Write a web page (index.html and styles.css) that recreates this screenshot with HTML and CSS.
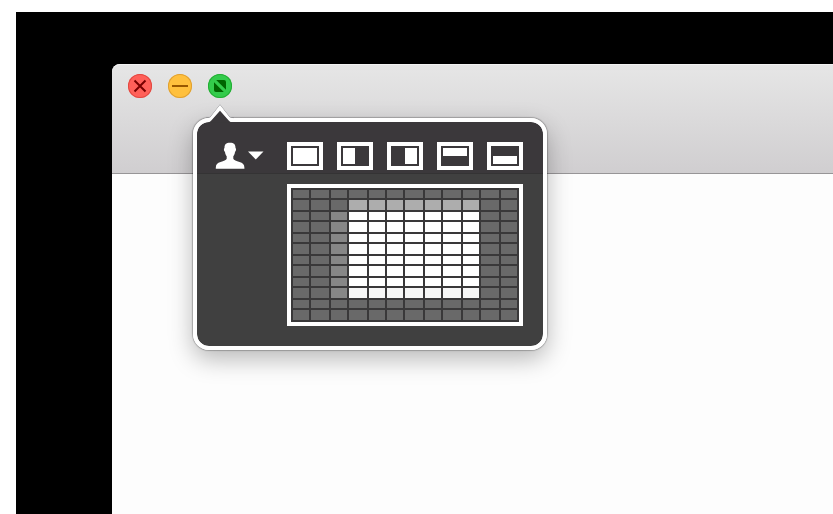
FILE: index.html
```
<!DOCTYPE html>
<html lang="en">
<head>
<meta charset="utf-8">
<title>Window layout</title>
<link rel="stylesheet" href="styles.css">
</head>
<body>
<main class="desktop">
  <section class="window">
    <header class="titlebar">
      <button class="light close" aria-label="Close"><svg viewBox="0 0 24 24"><path d="M6.500 6.500l11 11M17.500 6.500l-11 11" stroke="#790000" stroke-width="2"/></svg></button>
      <button class="light minimize" aria-label="Minimize"><svg viewBox="0 0 24 24"><path d="M4 12h16" stroke="#985700" stroke-width="2"/></svg></button>
      <button class="light zoom" aria-label="Zoom"><svg viewBox="0 0 24 24"><path d="M8.200 6H16a2 2 0 0 1 2 2v7.800zM6 8.200L15.800 18H8a2 2 0 0 1-2-2z" fill="#006400"/></svg></button>
    </header>
    <div class="popover">
      <svg class="arrow" viewBox="0 0 28 20"><path d="M0 14C3 14 4 13.500 5 12.300L14 .800L23 12.300C24 13.500 25 14 28 14" fill="none" stroke="#77777b" stroke-opacity=".6"/><path d="M0 18V14.300C3 14.300 4 13.800 5 12.600L14 1L23 12.600C24 13.800 25 14.300 28 14.300V18z" fill="#fff"/><path d="M2.500 18.200C4 18 4.500 17.500 5.300 16.600L14 6.800L22.700 16.600C23.500 17.500 24 18 25.500 18.200z" fill="#3b383b"/></svg>
      <div class="toolbar">
        <button class="profile" aria-label="Profile">
          <svg class="person" viewBox="0 0 30 28"><path d="M15 .8c4 0 5.600 1.700 5.500 5.200 1 .4.700 3.200-.5 3.900-.3 2-.9 3.300-1.700 4.300v2.600c.6 1.500 3 2.200 6.200 3.300 3.200 1 4.900 2.400 4.900 5.700v1H.8v-1c0-3.300 1.600-4.700 4.800-5.700 3.200-1.100 5.500-1.800 6.100-3.300v-2.600c-.8-1-1.400-2.300-1.700-4.300C8.800 9.200 8.500 6.400 9.500 6 9.400 2.500 11 .8 15 .8z" fill="#fff"/></svg>
          <svg class="caret" viewBox="0 0 16 9"><path d="M0 .5h15.500L7.800 8.600z" fill="#fff"/></svg>
        </button>
        <div class="presets">
          <button class="preset full" aria-label="Full"><i></i></button>
          <button class="preset left" aria-label="Left half"><i></i></button>
          <button class="preset right" aria-label="Right half"><i></i></button>
          <button class="preset top" aria-label="Top half"><i></i></button>
          <button class="preset bottom" aria-label="Bottom half"><i></i></button>
        </div>
      </div>
      <div class="grid" id="grid"></div>
    </div>
  </section>
</main>
<script src="grid.js"></script>
</body>
</html>
```
FILE: styles.css
```
* { box-sizing: border-box; }
body { margin: 0; background: #fff; height: 514px; overflow: hidden; font-family: "Liberation Sans", sans-serif; }
button { display: block; padding: 0; border: 0; background: none; }
svg { display: block; }

.desktop { margin: 12px 0 0 16px; padding: 52px 0 0 96px; height: 502px; background: #000; }
.window { position: relative; height: 450px; background: #fdfdfd; border-top-left-radius: 8px; }
.titlebar {
  display: flex;
  gap: 16px;
  height: 110px;
  padding: 9px 16px 0;
  border-top: 1px solid #f2f2f2;
  border-bottom: 1px solid #979597;
  border-top-left-radius: 8px;
  background: linear-gradient(#e6e6e6, #d0ced0);
}
.light { width: 24px; height: 24px; border-radius: 50%; }
.light svg { width: 24px; height: 24px; }
.close { background: #ff6059; box-shadow: inset 0 0 0 1px #e14942; }
.minimize { background: #ffc03d; box-shadow: inset 0 0 0 1px #dfa033; }
.zoom { background: #33cb4b; box-shadow: inset 0 0 0 1px #24ad34; }

.popover {
  position: absolute;
  left: 81px;
  top: 54px;
  width: 354px;
  height: 232px;
  padding: 20px;
  border: 4px solid #fff;
  border-radius: 16px;
  background: linear-gradient(#3b383b 51px, #343334 51px, #343334 52px, #404040 52px) padding-box;
  box-shadow: 0 0 1px 1px rgba(0, 0, 0, .24), 0 9px 24px rgba(0, 0, 0, .28);
}
.arrow { position: absolute; left: 9px; top: -18px; width: 28px; height: 20px; }
.toolbar { display: flex; justify-content: space-between; height: 42px; margin-left: -2px; }
.profile { display: flex; width: 50px; height: 28px; }
.person { width: 30px; height: 28px; }
.caret { width: 16px; height: 9px; margin: 9px 0 0 3px; }
.presets { display: flex; gap: 14px; }
.preset { display: flex; width: 36px; height: 28px; padding: 2px; border: 4px solid #fff; background: #3b383b; }
.preset i { width: 24px; height: 16px; background: #fff; }
.left i, .right i { width: 12px; }
.right { justify-content: flex-end; }
.preset.top i, .preset.bottom i { height: 8px; }
.bottom { align-items: flex-end; }

.grid {
  display: grid;
  grid-template-columns: 16px 18px 16px 18px 16px 16px 18px 16px 18px 16px 18px 16px;
  grid-template-rows: repeat(6, 8px 10px);
  gap: 2px;
  width: 236px;
  height: 142px;
  margin-left: auto;
  padding: 2px;
  border: 4px solid #fff;
  background: #393839;
}
.cell { background: #696969; }
.cell.side { background: #878787; }
.cell.head { background: #adadad; }
.cell.on { background: #fff; }
.cell.foot { background: #f6f6f6; }
```
FILE: grid.js
```
const grid = document.getElementById('grid');
for (let row = 0; row < 12; row++) {
  for (let col = 0; col < 12; col++) {
    const cell = document.createElement('span');
    const inCols = col >= 3 && col <= 9;
    let state = '';
    if (inCols && row === 1) state = ' head';
    else if (inCols && row === 9) state = ' foot';
    else if (inCols && row >= 2 && row < 9) state = ' on';
    else if (col === 2 && row >= 2 && row <= 9) state = ' side';
    cell.className = 'cell' + state;
    grid.append(cell);
  }
}
```
